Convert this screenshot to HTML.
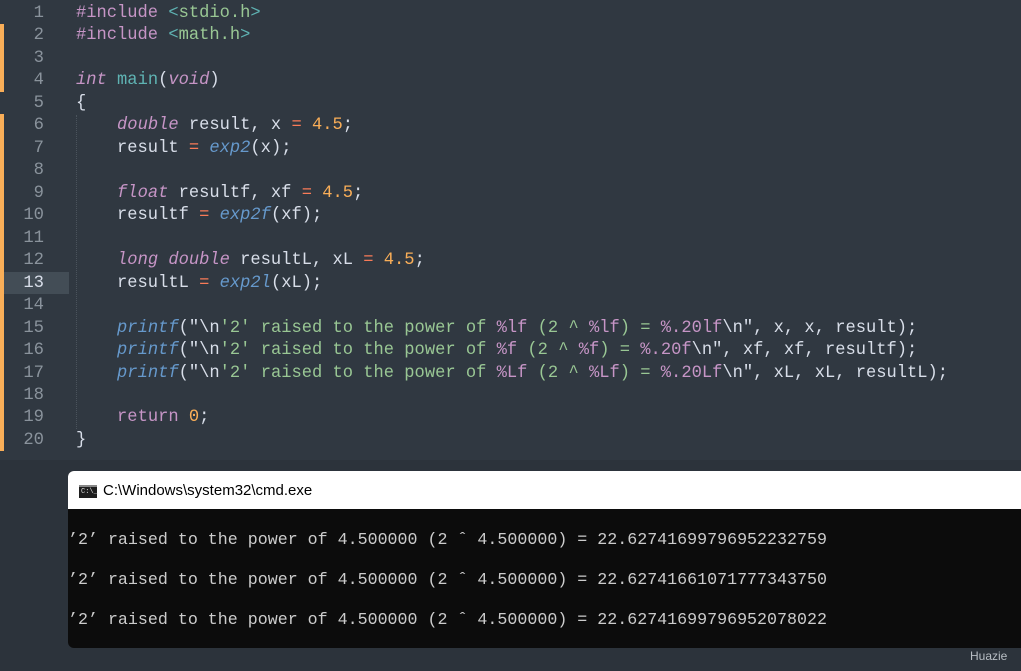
<!DOCTYPE html>
<html><head><meta charset="utf-8"><style>
html,body{margin:0;padding:0;}
body{width:1021px;height:671px;background:#2c333b;position:relative;overflow:hidden;font-family:"Liberation Mono",monospace;}
#ed{position:absolute;left:0;top:0;width:1021px;height:460px;background:#303841;}
.ln{position:absolute;left:0;width:44px;text-align:right;color:#8a939c;font-size:17.2px;line-height:22.47px;}
.code{position:absolute;left:76px;font-size:17.1px;line-height:22.47px;color:#d8dee9;white-space:pre;}
.bar{position:absolute;left:0;width:4px;background:#f9ae58;}
.hl{position:absolute;left:4px;width:65px;top:272px;height:22px;background:#434d56;}
.guide{position:absolute;left:76px;top:115px;height:314px;border-left:1px dotted #4a535c;}
.p{color:#c695c6}.g{color:#99c794}.t{color:#5fb3b3}.k{color:#c695c6;font-style:italic}.f{color:#6699cc;font-style:italic}.n{color:#f9ae58}.o{color:#f97b58}.w{color:#d8dee9}
#cmd{position:absolute;left:68px;top:471px;width:953px;height:177px;background:#0c0c0c;border-radius:6px 0 0 6px;overflow:hidden;}
#tb{height:38px;background:#fff;position:relative;}
#tb span{position:absolute;left:35px;top:11px;font-family:"Liberation Sans",sans-serif;font-size:15px;color:#000;}
.ic{position:absolute;left:11px;top:14px;width:18px;height:11px;background:#1e1e1e;border-top:2px solid #888;}
.ic:after{content:"C:\\_";position:absolute;left:2px;top:0px;font-size:7px;color:#ddd;font-family:"Liberation Mono",monospace;line-height:10px;}
.out{position:absolute;left:0;font-family:"Liberation Mono",monospace;font-size:16.65px;color:#cccccc;white-space:pre;}
#wm{position:absolute;left:970px;top:649px;font-family:"Liberation Sans",sans-serif;font-size:12px;color:#b8bec4;}
</style></head><body>
<div id="ed">
<div class="bar" style="top:24px;height:68px"></div>
<div class="bar" style="top:114px;height:337px"></div>
<div class="hl"></div>
<div class="guide"></div>
<div class="ln" style="top:3px">1<br>2<br>3<br>4<br>5<br>6<br>7<br>8<br>9<br>10<br>11<br>12<br><span style="color:#d8dee9">13</span><br>14<br>15<br>16<br>17<br>18<br>19<br>20</div>
<div class="code" style="top:3px"><span class="p">#include</span> <span class="t">&lt;</span><span class="g">stdio.h</span><span class="t">&gt;</span>
<span class="p">#include</span> <span class="t">&lt;</span><span class="g">math.h</span><span class="t">&gt;</span>

<span class="k">int</span> <span class="t">main</span>(<span class="k">void</span>)
{
    <span class="k">double</span> result, x <span class="o">=</span> <span class="n">4.5</span>;
    result <span class="o">=</span> <span class="f">exp2</span>(x);

    <span class="k">float</span> resultf, xf <span class="o">=</span> <span class="n">4.5</span>;
    resultf <span class="o">=</span> <span class="f">exp2f</span>(xf);

    <span class="k">long double</span> resultL, xL <span class="o">=</span> <span class="n">4.5</span>;
    resultL <span class="o">=</span> <span class="f">exp2l</span>(xL);

    <span class="f">printf</span>(<span class="w">"\n</span><span class="g">'2' raised to the power of </span><span class="p">%lf</span><span class="g"> (2 ^ </span><span class="p">%lf</span><span class="g">) = </span><span class="p">%.20lf</span><span class="w">\n"</span>, x, x, result);
    <span class="f">printf</span>(<span class="w">"\n</span><span class="g">'2' raised to the power of </span><span class="p">%f</span><span class="g"> (2 ^ </span><span class="p">%f</span><span class="g">) = </span><span class="p">%.20f</span><span class="w">\n"</span>, xf, xf, resultf);
    <span class="f">printf</span>(<span class="w">"\n</span><span class="g">'2' raised to the power of </span><span class="p">%Lf</span><span class="g"> (2 ^ </span><span class="p">%Lf</span><span class="g">) = </span><span class="p">%.20Lf</span><span class="w">\n"</span>, xL, xL, resultL);

    <span class="p">return</span> <span class="n">0</span>;
}</div>
</div>
<div id="cmd">
<div id="tb"><div class="ic"></div><span>C:\Windows\system32\cmd.exe</span></div>
<div class="out" style="top:59px">’2’ raised to the power of 4.500000 (2 ˆ 4.500000) = 22.62741699796952232759</div>
<div class="out" style="top:99px">’2’ raised to the power of 4.500000 (2 ˆ 4.500000) = 22.62741661071777343750</div>
<div class="out" style="top:139px">’2’ raised to the power of 4.500000 (2 ˆ 4.500000) = 22.62741699796952078022</div>
</div>
<div id="wm">Huazie</div>
</body></html>
